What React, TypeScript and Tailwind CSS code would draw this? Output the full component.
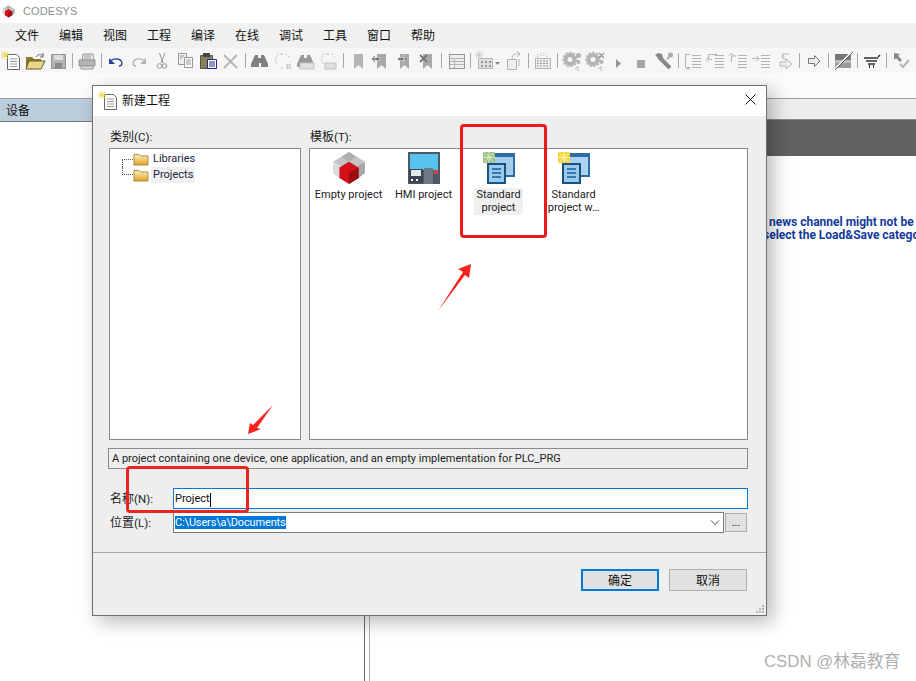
import React from "react";

const G = "#b4b4b4";
const D = "#969696";
type I = { w: number; el?: React.ReactNode; sep?: boolean };

const Svg = ({ children, w = 22, h = 22 }: { children: React.ReactNode; w?: number; h?: number }) => (
  <svg width={w} height={h} viewBox={`0 0 ${w} ${h}`} className="block shrink-0">
    {children}
  </svg>
);

const Star = ({ x = 3, y = 4, c = "#f2d83a" }: { x?: number; y?: number; c?: string }) => (
  <path d={`M${x} ${y - 4}v8M${x - 4} ${y}h8M${x - 3} ${y - 3}l6 6M${x + 3} ${y - 3}l-6 6`} stroke={c} strokeWidth="1" />
);

const NewDoc = () => (
  <Svg>
    <path d="M6.500 4.500h9l3 3v12h-12z" fill="#fff" stroke="#666" />
    <path d="M9 9h7M9 11.500h7M9 14h7M9 16.500h7" stroke="#999" />
    <Star x={4} y={5} />
  </Svg>
);
const Open = () => (
  <Svg>
    <path d="M2 7h6l2 2h7v2H7l-3 8H2z" fill="#8a7a2a" />
    <path d="M5 11h16l-4 8H2z" fill="#e6d98a" stroke="#6b5d1c" />
    <path d="M12 7c2-3 5-3 7-1M19 3v4h-3" fill="none" stroke="#666" />
  </Svg>
);
const Save = () => (
  <Svg>
    <rect x="4.500" y="4.500" width="14" height="14" fill={G} stroke={D} />
    <rect x="7" y="5" width="9" height="5" fill="#dedede" />
    <rect x="8" y="13" width="7" height="5" fill="#8a8a8a" />
  </Svg>
);
const Print = () => (
  <Svg>
    <path d="M7 4h10l1 6H6z" fill="#eee" stroke={D} />
    <path d="M3 10h16v6H3z" fill={G} stroke={D} />
    <path d="M5 16h12v3H5z" fill="#ddd" stroke={D} />
    <path d="M8 6h7M8 8h7" stroke={D} />
  </Svg>
);
const Undo = () => (
  <Svg>
    <path d="M5 11c4-3 11-3 12 2 0 2-1 3-3 3" fill="none" stroke="#2a3f9a" strokeWidth="1.300" />
    <path d="M4 8v6h6z" fill="#2a3f9a" />
  </Svg>
);
const Redo = () => (
  <Svg>
    <path d="M17 11c-4-3-11-3-12 2 0 2 1 3 3 3" fill="none" stroke={G} strokeWidth="1.300" />
    <path d="M18 8v6h-6z" fill={G} />
  </Svg>
);
const Cut = () => (
  <Svg>
    <path d="M8.500 3l3.500 10M14 3l-4 10" stroke={D} />
    <circle cx="8.500" cy="16" r="2.300" fill="none" stroke={D} />
    <circle cx="13.500" cy="16" r="2.300" fill="none" stroke={D} />
  </Svg>
);
const Copy = () => (
  <Svg>
    <path d="M4.500 3.500h8v11h-8z" fill="#eee" stroke={D} />
    <path d="M10.500 7.500h8v10h-8z" fill="#fff" stroke={D} />
    <path d="M6 6h4M6 8h2M12 10h5M12 12h5M12 14h5" stroke={D} />
  </Svg>
);
const Paste = () => (
  <Svg>
    <path d="M3.500 5.500h12v13h-12z" fill="#8b8150" stroke="#555" />
    <path d="M6 3h7v4H6z" fill="#444" />
    <path d="M10.500 9.500h9v9h-9z" fill="#fff" stroke="#1e2a8a" />
    <path d="M12 12h6M12 14h6M12 16h6" stroke="#1e2a8a" />
  </Svg>
);
const Del = () => (
  <Svg>
    <path d="M4 5l13 13M17 5L4 18" stroke={G} strokeWidth="1.800" />
  </Svg>
);
const Bino = ({ c = "#808080", tray = false }: { c?: string; tray?: boolean }) => (
  <Svg>
    <path d="M6 5h3v3h3V5h3l4 9v3h-7v-4h-2v4H2v-3z" fill={c} />
    {tray && <rect x="5" y="13" width="14" height="6" fill="#e0e0e0" stroke="#c4c4c4" />}
  </Svg>
);
const Replace = ({ tray = false }: { tray?: boolean }) => (
  <Svg>
    <path d="M6 4c-3 3-3 8 0 11M14 4l3 3M9 18h3" fill="none" stroke={G} strokeDasharray="1.500 1.500" />
    <path d="M8 4h3" stroke={G} />
    {tray ? <rect x="7" y="13" width="11" height="6" fill="#e0e0e0" stroke="#c4c4c4" /> : <text x="14" y="19" fontSize="8" fill={G} fontFamily="Liberation Sans">B</text>}
  </Svg>
);
const Mark = ({ v = 0 }: { v?: number }) => (
  <Svg>
    <path d="M7 4h9v15l-4.500-4L7 19z" fill={v ? "#a8a8a8" : G} />
    {v === 1 && <path d="M2 7.500h8v3H2zM1 9l4-4v8z" fill="#777" stroke="#f6f6f6" strokeWidth=".5" />}
    {v === 2 && <path d="M5 7.500h7v3H5zM15 9l-4-4v8z" fill="#777" stroke="#f6f6f6" strokeWidth=".5" />}
    {v === 3 && <path d="M4 5l7 7M11 5l-7 7" stroke="#777" strokeWidth="1.800" />}
  </Svg>
);
const Table = () => (
  <Svg>
    <rect x="4.500" y="4.500" width="15" height="14" fill="#eee" stroke={D} />
    <path d="M5 8.500h14M5 11.500h14M5 14.500h14M9.500 9v9" stroke={G} />
  </Svg>
);
const NewGrid = () => (
  <Svg w={29}>
    <path d="M5.500 8.500h14v10h-14z" fill="#e0e0e0" stroke={G} />
    <path d="M8 11h2v2H8zM12 11h2v2h-2zM16 11h2v2h-2zM8 15h2v2H8zM12 15h2v2h-2zM16 15h2v2h-2z" fill="#999" />
    <Star x={6} y={5} c="#c9c9c9" />
    <path d="M22 12h5l-2.500 3z" fill="#888" />
  </Svg>
);
const Export = () => (
  <Svg>
    <path d="M4.500 9.500h9v10h-9z" fill="#eee" stroke={G} />
    <path d="M9 9c0-4 3-6 7-5M14 1l3 3-3 3M16 9v7" fill="none" stroke={G} />
  </Svg>
);
const Build = () => (
  <Svg>
    <rect x="3.500" y="8.500" width="15" height="10" fill="#eee" stroke={G} />
    <path d="M5 11h12M5 13.500h12M5 16h12" stroke={D} strokeDasharray="2 1" />
    <path d="M6 4v3M9 3v4M12 3v4M15 4v3" stroke={G} strokeDasharray="1 1" />
  </Svg>
);
const Gear = ({ x = false }: { x?: boolean }) => (
  <Svg>
    <circle cx="9" cy="9.500" r="4.500" fill="none" stroke={G} strokeWidth="4" />
    <circle cx="9" cy="9.500" r="7" fill="none" stroke={G} strokeWidth="1.500" strokeDasharray="2.500 1.500" />
    {x ? <path d="M15 3l5 5M20 3l-5 5" stroke={D} strokeWidth="1.300" /> : <circle cx="17.500" cy="5.500" r="2.500" fill={G} />}
    <circle cx="17.500" cy="12" r="2" fill={G} />
    <path d="M14 19l3-2.500V21" fill="none" stroke={G} />
  </Svg>
);
const Play = () => (
  <Svg>
    <path d="M9 9l5 4.500-5 4.500z" fill={D} />
  </Svg>
);
const Stop = () => (
  <Svg>
    <rect x="7" y="10" width="8" height="8" fill="#a6a6a6" />
  </Svg>
);
const Wrench = () => (
  <Svg>
    <path d="M6 7l11 11" stroke="#888" strokeWidth="4" />
    <path d="M2 5l3-2 4 1 1 4-3 2z" fill="#888" />
    <path d="M14 9l3-3" stroke="#aaa" strokeWidth="2" />
    <circle cx="17.500" cy="5" r="2.500" fill="#aaa" />
  </Svg>
);
const Step = ({ v = 0 }: { v?: number }) => (
  <Svg>
    {v === 0 && <path d="M8 4.500H3.500v13H8" fill="none" stroke={G} />}
    {v === 0 && <path d="M6 20l-2.500-2.500h5z" fill={G} />}
    {v === 1 && <path d="M12 4.500H3.500v5H7M1 9.500l3-3M1 9.500l3 3" fill="none" stroke={G} />}
    {v === 2 && <path d="M3.500 12V6H8M3.500 3L1 6M3.500 3L6 6" fill="none" stroke={G} />}
    {v === 3 && <path d="M1 8.500h7M5 5.500l3 3-3 3" fill="none" stroke={G} />}
    <path d="M10 5.500h9M10 8.500h9M10 11.500h9M10 14.500h9M10 17.500h9" stroke={G} />
  </Svg>
);
const Jump = () => (
  <Svg>
    <path d="M15 4H9v4" fill="none" stroke={G} />
    <path d="M6 12h6V9l6 5-6 5v-3H6z" fill="#eee" stroke={G} />
    <path d="M9 4c-2 3-1 5 3 5" fill="none" stroke={G} />
  </Svg>
);
const ArrowR = () => (
  <Svg>
    <path d="M5.500 8.500h6V5.500l5.500 5.500-5.500 5.500V13.500h-6z" fill="#eee" stroke="#777" />
  </Svg>
);
const Flag = () => (
  <Svg>
    <path d="M3 4h16v6H3z" fill="#777" />
    <path d="M3 10h16v3H3z" fill="#bbb" />
    <path d="M3 13h16v5H3z" fill="#999" />
    <path d="M2 20L20 2" stroke="#f6f6f6" strokeWidth="2" />
    <path d="M3 20L21 2" stroke="#555" />
  </Svg>
);
const Filter = () => (
  <Svg>
    <path d="M3 8h14M5 11h11M7 14h7" stroke="#333" strokeWidth="1.300" />
    <path d="M8 15h1v3H8zM12 15h1v3h-1z" fill="#333" />
    <path d="M17 7l2-2" stroke="#333" strokeWidth="1.500" />
  </Svg>
);
const Check = () => (
  <Svg>
    <path d="M4 3l6 1-2 2 4 4-2 2-4-4-2 2z" fill="#888" />
    <path d="M10 14l3 3 6-7" fill="none" stroke={G} strokeWidth="2" />
  </Svg>
);

const S: I = { w: 6, sep: true };
const tools: I[] = [
  { w: 23, el: <NewDoc /> }, { w: 23, el: <Open /> }, { w: 23, el: <Save /> }, S,
  { w: 23, el: <Print /> }, S,
  { w: 23, el: <Undo /> }, { w: 23, el: <Redo /> }, { w: 23, el: <Cut /> }, { w: 23, el: <Copy /> }, { w: 23, el: <Paste /> }, { w: 23, el: <Del /> }, S,
  { w: 23, el: <Bino /> }, { w: 23, el: <Replace /> }, { w: 23, el: <Bino c="#999" tray /> }, { w: 23, el: <Replace tray /> }, S,
  { w: 23, el: <Mark /> }, { w: 23, el: <Mark v={1} /> }, { w: 23, el: <Mark v={2} /> }, { w: 23, el: <Mark v={3} /> }, S,
  { w: 23, el: <Table /> }, S,
  { w: 29, el: <NewGrid /> }, { w: 23, el: <Export /> }, S,
  { w: 23, el: <Build /> }, S,
  { w: 23, el: <Gear /> }, { w: 23, el: <Gear x /> }, { w: 23, el: <Play /> }, { w: 23, el: <Stop /> }, { w: 23, el: <Wrench /> }, S,
  { w: 23, el: <Step /> }, { w: 23, el: <Step v={1} /> }, { w: 23, el: <Step v={2} /> }, { w: 23, el: <Step v={3} /> }, { w: 23, el: <Jump /> }, S,
  { w: 23, el: <ArrowR /> }, S,
  { w: 23, el: <Flag /> }, S,
  { w: 23, el: <Filter /> }, S,
  { w: 23, el: <Check /> },
];

const menus = ["文件", "编辑", "视图", "工程", "编译", "在线", "调试", "工具", "窗口", "帮助"];

const Folder = () => (
  <svg width="16" height="13" viewBox="0 0 16 13" className="block shrink-0">
    <defs>
      <linearGradient id="fold" x1="0" y1="0" x2="0" y2="1">
        <stop offset="0" stopColor="#fff3c4" />
        <stop offset="1" stopColor="#e2a21f" />
      </linearGradient>
    </defs>
    <path d="M1 1.500h5l1.500 1.500H15v9H1z" fill="url(#fold)" stroke="#a88a4a" />
  </svg>
);

const LogoCube = ({ size = 18 }: { size?: number }) => (
  <svg width={size} height={size} viewBox="0 0 32 32" className="block shrink-0">
    <path d="M16 1l15 9-15 9L1 10z" fill="#c4c4c4" />
    <path d="M9 5.500l7-4.500 7 4.500-7 4.500z" fill="#b0b0b0" />
    <path d="M1 10v11l7 5V14z" fill="#dcdcdc" />
    <path d="M31 10v11l-7 5V14z" fill="#a9a9a9" />
    <path d="M16 10l9 5.500v10L16 31l-9-5.500v-10z" fill="#d3101a" />
    <path d="M16 20l9-4.500v10L16 31z" fill="#9d0b12" />
  </svg>
);

const HmiIcon = () => (
  <svg width="32" height="32" viewBox="0 0 32 32" className="block">
    <rect x="0" y="0" width="32" height="32" fill="#4d5a66" />
    <rect x="2" y="2" width="28" height="16" fill="#57c4f0" />
    <rect x="1" y="17" width="14" height="14" fill="#3c4650" />
    <rect x="3" y="18" width="10" height="6" fill="#e5e8ea" />
    <rect x="16" y="16" width="9" height="16" fill="#6d7a86" />
    <rect x="26" y="18" width="4" height="4" fill="#c44" />
    <path d="M3 27h2v2H3zM8 27h2v2H8z" fill="#fff" />
  </svg>
);

const StdIcon = ({ bright = false }: { bright?: boolean }) => (
  <svg width="32" height="32" viewBox="0 0 32 32" className="block">
    <rect x="4" y="1" width="28" height="24" fill="#2d6ca8" />
    <rect x="12" y="5" width="18" height="18" fill={bright ? "#a9d3f1" : "#a4cdea"} />
    <rect x="0" y="0" width="12" height="11" fill={bright ? "#f5d23c" : "#9fc08a"} />
    <path d="M6 0v11M0 5.500h12M1 .500l10 10M11 .500l-10 10" stroke={bright ? "#fff5b0" : "#d8ebc0"} />
    <rect x="4" y="11" width="19" height="21" fill="#16537e" />
    <rect x="6" y="13" width="15" height="17" fill="#9cc8ea" />
    <path d="M9 16h9v2H9zM9 20h9v2H9zM9 24h9v2H9z" fill="#2f79b6" />
  </svg>
);

const Template = ({ icon, lines, shade = false }: { icon: React.ReactNode; lines: string[]; shade?: boolean }) => (
  <div className="flex flex-col items-center w-[75px] shrink-0">
    <div className="h-[32px] flex items-center justify-center">{icon}</div>
    <div className={`mt-[4px] text-center leading-[13px] whitespace-nowrap ${shade ? "bg-[#f0f0f0] px-[2px] pb-px" : ""}`}>
      {lines.map((l) => (
        <div key={l}>{l}</div>
      ))}
    </div>
  </div>
);

function Label({ cn, en }: { cn: string; en: string }) {
  return (
    <span className="whitespace-nowrap text-[#1a1a1a] ml-px">
      <span className="text-[12px]">{cn}</span>
      <span className="text-[11.500px] text-[#222]">{en}</span>
    </span>
  );
}

export default function App() {
  return (
    <div className="relative w-[916px] h-[681px] overflow-hidden bg-white font-['Roboto','Noto_Sans_CJK_SC',sans-serif] text-[11px] text-[#111]">
      {/* Title */}
      <div className="h-[23px] bg-white flex items-center pl-[2px] gap-[8px]">
        <LogoCube size={13} />
        <span className="font-['Liberation_Sans',sans-serif] text-[11px] tracking-[0.1px] text-[#8f8f8f]">CODESYS</span>
      </div>
      {/* Menu */}
      <div className="h-[25px] bg-[#f0f0f0] flex items-center pl-[5px]">
        {menus.map((m) => (
          <div key={m} className="w-[44px] text-center text-[12px] text-[#111]">
            {m}
          </div>
        ))}
      </div>
      {/* Toolbar */}
      <div className="h-[25px] bg-[#f6f6f6] flex items-center">
        {tools.map((t, i) =>
          t.sep ? (
            <div key={i} style={{ width: t.w }} className="flex justify-center shrink-0">
              <div className="w-px h-[15px] bg-[#a8a8a8]" />
            </div>
          ) : (
            <div key={i} style={{ width: t.w }} className="flex justify-center items-center shrink-0">
              {t.el}
            </div>
          )
        )}
      </div>
      {/* Gap */}
      <div className="h-[25px] bg-[#fbfbfb]" />
      {/* Work area */}
      <div className="flex h-[583px] border-t border-[#9e9e9e]">
        <div className="w-[365px] shrink-0 border-r border-[#6e6e6e] flex flex-col">
          <div className="h-[23px] bg-[#bccddc] border-b border-[#777] flex items-center pl-[6px] pt-[2px] text-[12px]">设备</div>
          <div className="flex-1 bg-white" />
        </div>
        <div className="w-[5px] shrink-0 border-r border-[#b0b0b0]" />
        <div className="flex-1 min-w-0 overflow-hidden flex flex-col">
          <div className="h-[20px] bg-[#eeeeee]" />
          <div className="h-[37px] bg-[#616161] border-t border-[#888]" />
          <div className="flex-1 bg-white pt-[60px] text-[12px] font-bold leading-[13px] text-[#123a9c] whitespace-nowrap">
            <div className="pl-[399px]">news channel might not be</div>
            <div className="pl-[393px]">select the Load&amp;Save catego</div>
          </div>
        </div>
      </div>

      {/* Dialog */}
      <div className="absolute left-[92px] top-[85px] w-[675px] h-[531px] bg-[#eeeeee] border border-[#6f6f6f] shadow-[6px_6px_18px_rgba(0,0,0,0.28)] flex flex-col">
        <div className="h-[30px] bg-white flex items-center pl-[5px] shrink-0">
          <NewDoc />
          <span className="ml-[2px] text-[12px] text-[#111]">新建工程</span>
          <svg width="11" height="11" viewBox="0 0 11 11" className="ml-auto mr-[10px] mb-[3px]">
            <path d="M.500.500l10 10M10.500.500l-10 10" stroke="#111" />
          </svg>
        </div>
        <div className="flex-1 flex flex-col pl-[16px] pr-[18px] pt-[11px] relative">
          <div className="flex gap-[8px] h-[313px]">
            <div className="w-[192px] flex flex-col">
              <div className="h-[21px] leading-[21px]"><Label cn="类别" en="(C):" /></div>
              <div className="flex-1 bg-white border border-[#8a8a8a] pl-[12px] pt-[2px]">
                <div className="flex items-center h-[16px]">
                  <div className="w-[11px] h-[8px] border-l border-t border-dotted border-[#555] mt-[8px]" />
                  <Folder />
                  <span className="ml-[4px] text-[#1a2340]">Libraries</span>
                </div>
                <div className="flex items-center h-[16px]">
                  <div className="w-[11px] h-[8px] border-l border-b border-dotted border-[#555] mb-[8px]" />
                  <Folder />
                  <span className="ml-[2px] px-[2px] bg-[#f0f0f0] text-[#1a2340]">Projects</span>
                </div>
              </div>
            </div>
            <div className="flex-1 flex flex-col">
              <div className="h-[21px] leading-[21px]"><Label cn="模板" en="(T):" /></div>
              <div className="flex-1 bg-white border border-[#8a8a8a] pt-[3px] pl-px flex items-start text-[#222] overflow-hidden">
                <Template icon={<LogoCube size={34} />} lines={["Empty project"]} />
                <Template icon={<HmiIcon />} lines={["HMI project"]} />
                <Template shade icon={<StdIcon />} lines={["Standard", "project"]} />
                <Template icon={<StdIcon bright />} lines={["Standard", "project w…"]} />
              </div>
            </div>
          </div>
          <div className="mt-[8px] ml-[-1px] h-[21px] bg-[#eeeeee] border border-[#8a8a8a] flex items-center pl-[3px] pt-[2px] text-[#222]">
            A project containing one device, one application, and an empty implementation for PLC_PRG
          </div>
          <div className="mt-[19px] flex items-center h-[21px]">
            <div className="w-[64px] pt-[2px]"><Label cn="名称" en="(N):" /></div>
            <div className="flex-1 h-full bg-white border border-[#0078d7] flex items-center pl-[1px] pt-[2px]">
              <span>Project</span>
              <span className="inline-block w-px h-[14px] bg-black" />
            </div>
          </div>
          <div className="mt-[3px] flex items-center h-[21px]">
            <div className="w-[64px] pt-[2px]"><Label cn="位置" en="(L):" /></div>
            <div className="w-[551px] h-full bg-white border border-[#7a7a7a] flex items-center pl-[1px]">
              <span className="bg-[#0078d7] text-white leading-[13px] tracking-[-0.15px]">C:\Users\a\Documents</span>
              <svg width="10" height="6" viewBox="0 0 10 6" className="ml-auto mr-[3px]">
                <path d="M1 .500l4 4 4-4" fill="none" stroke="#444" />
              </svg>
            </div>
            <div className="ml-[1px] w-[22px] h-[19px] bg-[#e1e1e1] border border-[#adadad] flex items-center justify-center text-[11px] text-[#111] leading-none">...</div>
          </div>
          <div className="mt-[19px] ml-[-16px] mr-[-18px] border-t border-[#a6a6a6] flex-1 flex justify-end items-start pt-[16px] pr-[19px] gap-[10px] text-[12px]">
            <div className="w-[78px] h-[22px] bg-[#e1e1e1] border-2 border-[#0078d7] flex items-center justify-center pt-[2px]">确定</div>
            <div className="w-[78px] h-[22px] bg-[#e1e1e1] border border-[#adadad] flex items-center justify-center pt-[2px]">取消</div>
          </div>
          <svg width="10" height="10" viewBox="0 0 10 10" className="absolute right-[1px] bottom-[1px]">
            <path d="M7 1h2v2H7zM4 4h2v2H4zM7 4h2v2H7zM1 7h2v2H1zM4 7h2v2H4zM7 7h2v2H7z" fill="#b5b5b5" />
          </svg>
        </div>
      </div>

      {/* Annotations */}
      <div className="absolute left-[460px] top-[124px] w-[87px] h-[114px] border-[3px] border-[#f01818] rounded-[4px]" />
      <div className="absolute left-[126px] top-[466px] w-[123px] h-[47px] border-[3px] border-[#e8251f] rounded-[4px]" />
      <svg width="40" height="52" viewBox="0 0 40 52" className="absolute left-[435px] top-[262px]">
        <path d="M36 2L23 7l5 3L3 49 30 13l4 3z" fill="#f5241c" />
      </svg>
      <svg width="30" height="34" viewBox="0 0 30 34" className="absolute left-[246px] top-[403px]">
        <path d="M2 31L4 20l3 2L27 2 11 25l4 1z" fill="#f5241c" />
      </svg>
      <div className="absolute left-[764px] top-[653px] text-[16.800px] leading-[18px] text-[#b0b0b0] font-['Liberation_Sans','Noto_Sans_CJK_SC',sans-serif] whitespace-nowrap">CSDN @林磊教育</div>
    </div>
  );
}
